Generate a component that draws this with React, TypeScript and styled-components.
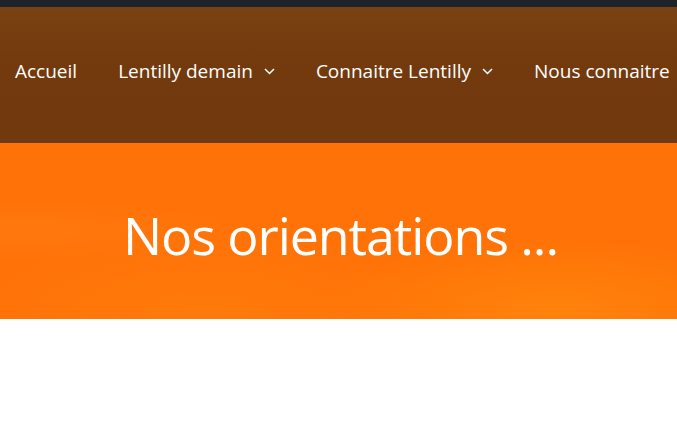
import React from "react";
import styled, { createGlobalStyle } from "styled-components";

const GlobalStyle = createGlobalStyle`
  html, body {
    margin: 0;
    padding: 0;
    background: #fff;
    font-family: "Open Sans", "Noto Sans", sans-serif;
  }
`;

const TopStrip = styled.div`
  height: 7px;
  background: #1d2329;
`;

const Header = styled.header`
  height: 136px;
  box-sizing: border-box;
  background: linear-gradient(180deg, #7a4112 0%, #733a0e 40%, #71390e 100%);
  display: flex;
  align-items: center;
  padding: 0 0 8px 15px;
  overflow: hidden;
`;

const Menu = styled.ul`
  display: flex;
  align-items: center;
  gap: 41px;
  margin: 0;
  padding: 0;
  list-style: none;
  white-space: nowrap;
`;

const MenuItem = styled.li`
  display: flex;
  align-items: center;
  gap: 11px;
  color: #fff;
  font-size: 19px;
`;

const Hero = styled.section`
  height: 176px;
  background:
    radial-gradient(ellipse at 3% 50%, rgba(255, 140, 40, 0.25), transparent 25%),
    radial-gradient(ellipse at 82% 95%, rgba(255, 145, 15, 0.55), transparent 30%),
    radial-gradient(ellipse at 30% 100%, rgba(255, 140, 20, 0.3), transparent 35%),
    #ff7207;
  display: flex;
  align-items: center;
  justify-content: center;
`;

const Title = styled.h1`
  margin: 6px 0 0;
  padding-left: 4px;
  color: #fff;
  font-weight: 400;
  font-size: 52px;
  letter-spacing: -1.1px;
`;

const Chevron = () => (
  <svg width="11" height="7" viewBox="0 0 11 7" fill="none">
    <path d="M1 1 L5.5 5.5 L10 1" stroke="#fff" strokeWidth="1.5" />
  </svg>
);

const items = [
  { label: "Accueil", sub: false },
  { label: "Lentilly demain", sub: true },
  { label: "Connaitre Lentilly", sub: true },
  { label: "Nous connaitre", sub: false },
];

export default function App() {
  return (
    <>
      <GlobalStyle />
      <TopStrip />
      <Header>
        <Menu>
          {items.map((it) => (
            <MenuItem key={it.label}>
              {it.label}
              {it.sub && <Chevron />}
            </MenuItem>
          ))}
        </Menu>
      </Header>
      <Hero>
        <Title>Nos orientations ...</Title>
      </Hero>
    </>
  );
}
